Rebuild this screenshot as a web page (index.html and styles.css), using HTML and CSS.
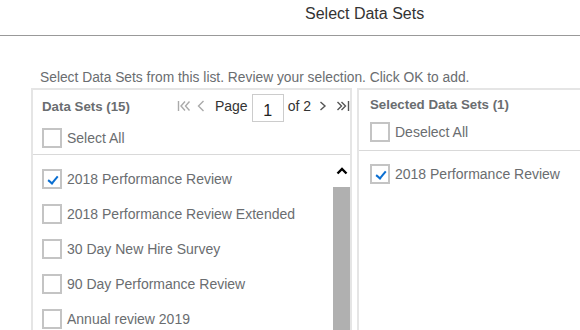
FILE: index.html
```html
<!DOCTYPE html>
<html lang="en">
  <head>
    <meta charset="UTF-8" />
    <meta name="viewport" content="width=device-width, initial-scale=1.0" />
    <title>Select Data Sets</title>
    <link rel="stylesheet" href="styles.css">
  </head>
  <body>
    <div id="dialog">
      <div class="dialog-header">Select Data Sets</div>

      <div class="dialog-content">
        <p class="hint">Select Data Sets from this list. Review your selection. Click OK to add.</p>

        <div class="panels">
          <div class="panel panel-left">
            <div class="panel-header">
              <span class="panel-title">Data Sets (15)</span>
              <div class="pager">
                <svg class="pager-icon disabled" width="14" height="12" viewBox="0 0 14 12">
                  <path d="M1.5 1v10" />
                  <path d="M8 1.5L4 6l4 4.5M12.5 1.5L8.5 6l4 4.5" />
                </svg>
                <svg class="pager-icon disabled" width="8" height="12" viewBox="0 0 8 12">
                  <path d="M6.5 1L1.5 6l5 5" />
                </svg>
                <span class="pager-label">Page</span>
                <span class="pager-input">1</span>
                <span class="pager-label">of 2</span>
                <svg class="pager-icon" width="8" height="12" viewBox="0 0 8 12">
                  <path d="M1.5 2l4.5 4-4.5 4" />
                </svg>
                <svg class="pager-icon last" width="14" height="12" viewBox="0 0 14 12">
                  <path d="M1.5 2l4 4-4 4M5.5 2l4 4-4 4" />
                  <path d="M12.5 1v10" />
                </svg>
              </div>
            </div>
            <div class="select-row">
              <span class="checkbox"></span>
              <span class="item-text">Select All</span>
            </div>
            <div class="list-wrap">
              <ul class="list">
                <li class="list-item">
                  <span class="checkbox checked"></span>
                  <span class="item-text">2018 Performance Review</span>
                </li>
                <li class="list-item">
                  <span class="checkbox"></span>
                  <span class="item-text">2018 Performance Review Extended</span>
                </li>
                <li class="list-item">
                  <span class="checkbox"></span>
                  <span class="item-text">30 Day New Hire Survey</span>
                </li>
                <li class="list-item">
                  <span class="checkbox"></span>
                  <span class="item-text">90 Day Performance Review</span>
                </li>
                <li class="list-item">
                  <span class="checkbox"></span>
                  <span class="item-text">Annual review 2019</span>
                </li>
              </ul>
              <div class="scrollbar">
                <div class="scroll-up">
                  <svg width="12" height="8" viewBox="0 0 12 8">
                    <path d="M1.5 6.5L6 2l4.5 4.5" />
                  </svg>
                </div>
                <div class="scroll-thumb"></div>
              </div>
            </div>
          </div>

          <div class="panel panel-right">
            <div class="panel-header short">
              <span class="panel-title">Selected Data Sets (1)</span>
            </div>
            <div class="select-row short">
              <span class="checkbox"></span>
              <span class="item-text">Deselect All</span>
            </div>
            <ul class="list short">
              <li class="list-item">
                <span class="checkbox checked"></span>
                <span class="item-text">2018 Performance Review</span>
              </li>
            </ul>
          </div>
        </div>
      </div>
    </div>
  </body>
</html>
```

FILE: styles.css
```css
body {
  font-family: "Liberation Sans", Arial, sans-serif;
  margin: 0;
  padding: 0;
  color: #6a6d70;
  background-color: #fff;
  overflow: hidden;
}

.dialog-header {
  height: 35px;
  line-height: 28px;
  padding-left: 305px;
  font-size: 16px;
  color: #333;
  border-bottom: 1px solid #999;
}

.dialog-content {
  padding-left: 31px;
}

.hint {
  margin: 34px 0 2px 9px;
  font-size: 13.8px;
  line-height: 16px;
}

.panels {
  display: flex;
  gap: 5px;
}

.panel {
  border: 2px solid #e5e5e5;
  border-bottom: none;
  height: 242px;
  box-sizing: border-box;
  overflow: hidden;
}

.panel-left {
  width: 321px;
  flex-shrink: 0;
}

.panel-right {
  width: 223px;
  flex-shrink: 0;
  border-right: none;
}

.panel-header {
  height: 32px;
  display: flex;
  align-items: center;
  justify-content: space-between;
  padding-left: 9px;
}

.panel-header.short {
  height: 28px;
  padding-left: 11px;
}

.panel-title {
  font-size: 13.3px;
  font-weight: bold;
}

.pager {
  display: flex;
  align-items: center;
  font-size: 14px;
  color: #333;
}

.pager-icon {
  fill: none;
  stroke: #555;
  stroke-width: 1.4;
  margin-left: 4px;
}

.pager-icon.last {
  margin-left: 9px;
}

.pager-icon.disabled {
  stroke: #aaa;
  margin-left: 0;
  margin-right: 6px;
}

.pager-label {
  margin: 0 4px;
}

.pager-input {
  width: 32px;
  height: 28px;
  border: 1px solid #ccc;
  margin-top: 4px;
  text-align: center;
  font-size: 16px;
  box-sizing: border-box;
  line-height: 32px;
  color: #222;
}

.select-row {
  display: flex;
  align-items: center;
  padding: 6px 9px;
  border-bottom: 1px solid #d9d9d9;
}

.select-row.short {
  padding: 4px 11px 8px;
}

.checkbox {
  width: 20px;
  height: 20px;
  border: 2px solid #c4c4c4;
  box-sizing: border-box;
  flex-shrink: 0;
  position: relative;
}

.checkbox.checked::after {
  content: "";
  position: absolute;
  left: 6px;
  top: 3px;
  width: 4px;
  height: 8px;
  border-right: 2px solid #0a6ed1;
  border-bottom: 2px solid #0a6ed1;
  transform: rotate(40deg);
}

.item-text {
  margin-left: 5px;
  font-size: 14px;
}

.list-wrap {
  display: flex;
  height: 200px;
}

.list {
  list-style: none;
  margin: 0;
  padding: 6px 0 0 9px;
  flex: 1;
}

.list.short {
  padding: 5px 0 0 11px;
}

.list-item {
  height: 35px;
  display: flex;
  align-items: center;
}

.scrollbar {
  width: 17px;
  display: flex;
  flex-direction: column;
}

.scroll-up {
  height: 32px;
  display: flex;
  align-items: center;
  justify-content: center;
}

.scroll-up svg {
  fill: none;
  stroke: #000;
  stroke-width: 2.4;
}

.scroll-thumb {
  flex: 1;
  background-color: #b0b0b0;
}
```
